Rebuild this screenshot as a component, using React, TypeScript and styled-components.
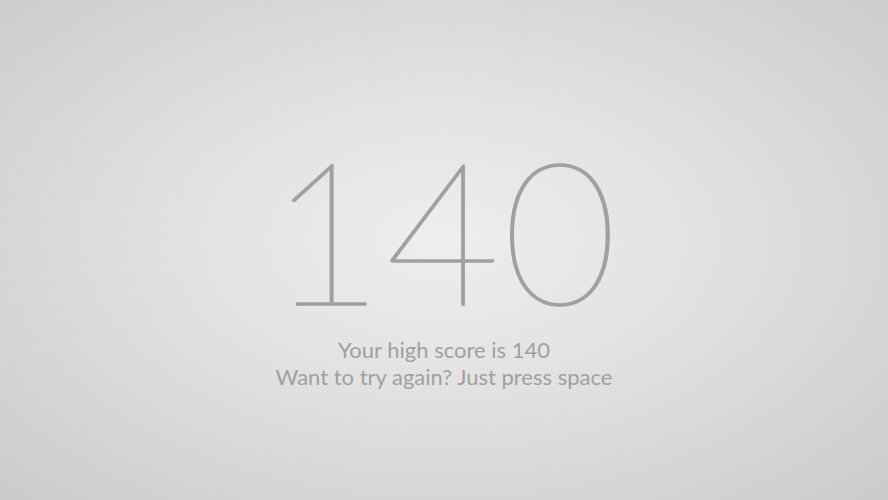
import React from "react";
import styled, { createGlobalStyle } from "styled-components";

const GlobalStyle = createGlobalStyle`
  html, body {
    margin: 0;
    padding: 0;
    height: 100%;
  }
  #root {
    height: 100%;
  }
`;

const Screen = styled.main`
  width: 100vw;
  height: 100vh;
  display: flex;
  flex-direction: column;
  align-items: center;
  justify-content: center;
  background: radial-gradient(ellipse at 50% 48%, #eeeeee 0%, #e2e2e2 40%, #cbcbcb 100%);
  font-family: Lato, "Liberation Sans", sans-serif;
  color: #a0a0a0;
  overflow: hidden;
`;

const Score = styled.div`
  font-size: 198px;
  font-weight: 100;
  line-height: 1;
  letter-spacing: 2px;
  margin-top: 20px;
  -webkit-text-stroke: 1.6px #a0a0a0;
`;

const Message = styled.p`
  margin: 8px 0 0;
  font-size: 22px;
  line-height: 27px;
  text-align: center;
`;

export default function App() {
  const score = 140;
  return (
    <>
      <GlobalStyle />
      <Screen>
        <Score>{score}</Score>
        <Message>
          Your high score is {score}
          <br />
          Want to try again? Just press space
        </Message>
      </Screen>
    </>
  );
}
